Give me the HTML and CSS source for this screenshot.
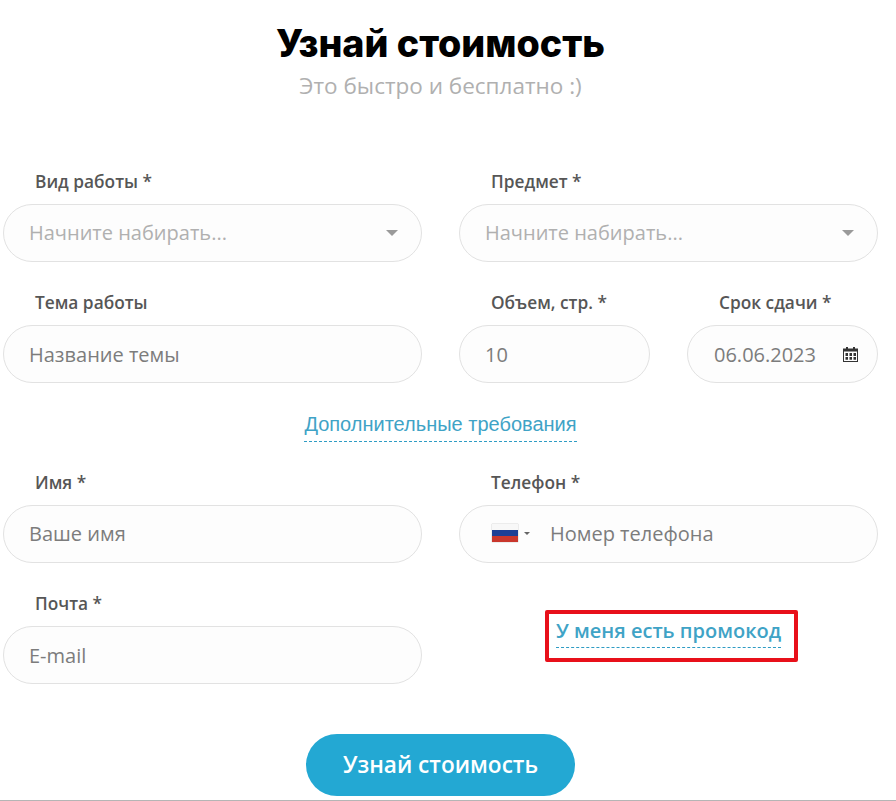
FILE: index.html
```html
<!DOCTYPE html>
<html lang="ru">
<head>
<meta charset="utf-8">
<title>Узнай стоимость</title>
<link rel="stylesheet" href="styles.css">
</head>
<body>
<main class="page">
  <h1 class="title">Узнай стоимость</h1>
  <p class="subtitle">Это быстро и бесплатно :)</p>
  <form class="form">
    <div class="row row-first">
      <div class="field">
        <label class="label">Вид работы *</label>
        <div class="control control-select">
          <span class="placeholder">Начните набирать...</span>
          <span class="caret"></span>
        </div>
      </div>
      <div class="field">
        <label class="label">Предмет *</label>
        <div class="control control-select">
          <span class="placeholder">Начните набирать...</span>
          <span class="caret"></span>
        </div>
      </div>
    </div>
    <div class="row">
      <div class="field">
        <label class="label">Тема работы</label>
        <div class="control"><span class="value">Название темы</span></div>
      </div>
      <div class="pair">
        <div class="field">
          <label class="label">Объем, стр. *</label>
          <div class="control"><span class="value">10</span></div>
        </div>
        <div class="field">
          <label class="label">Срок сдачи *</label>
          <div class="control control-date">
            <span class="value">06.06.2023</span>
            <svg class="calendar" viewBox="0 0 15 15" aria-hidden="true">
              <path fill="#333" fill-rule="evenodd" d="M3 0h2v1.500h5V0h2v1.500h3V15H0V1.500h3zM1 4.500V14h13V4.500zM2.500 6h2.500v3H2.500zm4 0h2.500v3H6.500zm4 0h2.500v3h-2.500zM2.500 10h2.500v2.800H2.500zm4 0h2.500v2.800H6.500zm4 0h2.500v2.800h-2.500z"/>
            </svg>
          </div>
        </div>
      </div>
    </div>
    <div class="extra"><a class="extra-link">Дополнительные требования</a></div>
    <div class="row row-contacts">
      <div class="field">
        <label class="label">Имя *</label>
        <div class="control control-raised"><span class="value">Ваше имя</span></div>
      </div>
      <div class="field">
        <label class="label">Телефон *</label>
        <div class="control control-phone control-raised">
          <span class="flag"><i class="stripe white"></i><i class="stripe blue"></i><i class="stripe red"></i></span>
          <span class="mini-caret"></span>
          <span class="value">Номер телефона</span>
        </div>
      </div>
    </div>
    <div class="row">
      <div class="field">
        <label class="label">Почта *</label>
        <div class="control"><span class="value">E-mail</span></div>
      </div>
      <div class="promo-cell">
        <div class="promo-box"><a class="promo-link">У меня есть промокод</a></div>
      </div>
    </div>
    <div class="actions"><button class="submit" type="button">Узнай стоимость</button></div>
  </form>
</main>
</body>
</html>
```
FILE: styles.css
```css
* { box-sizing: border-box; }
html, body { margin: 0; height: 100%; }
body { background: #fff; font-family: "Open Sans", "Liberation Sans", sans-serif; overflow: hidden; }
.page { height: 801px; padding: 23px 18px 0 3px; border-bottom: 1px solid #b5b5b5; }
.title { margin: 0; text-align: center; font-family: Inter, "Open Sans", sans-serif; font-weight: 800; font-size: 37.700px; line-height: 41px; color: #000; }
.subtitle { margin: 5px 0 0; text-align: center; font-size: 22.500px; line-height: 34px; color: #b0b0b0; }
.form { margin-top: 67px; }
.row { display: grid; grid-template-columns: 419px 419px; column-gap: 37px; margin-top: 29px; }
.row-first { margin-top: 0; }
.row-contacts { margin-top: 0; }
.pair { display: grid; grid-template-columns: 191px 191px; column-gap: 37px; }
.label { display: block; padding: 1px 0 0 32px; font-weight: 600; font-size: 17.300px; line-height: 22px; color: #565656; margin-bottom: 11px; }
.control { height: 58px; border: 1px solid #e2e2e2; border-radius: 29px; background: #fdfdfd; display: flex; align-items: center; padding: 0 25px; font-size: 20px; color: #7c7c7c; }
.control-raised { padding-bottom: 2px; }
.placeholder { color: #b0b0b0; flex: 1; }
.control-select { padding-right: 23px; padding-bottom: 2px; }
.caret { width: 0; height: 0; border-left: 6px solid transparent; border-right: 6px solid transparent; border-top: 6px solid #9a9a9a; margin-top: 2px; }
.control-date { justify-content: space-between; padding-left: 26px; padding-right: 19px; }
.calendar { width: 15px; height: 15px; flex: none; }
.control-phone { padding-left: 32px; }
.flag { width: 26px; height: 18px; display: flex; flex-direction: column; flex: none; box-shadow: 0 0 1px #999; }
.stripe { flex: 1; display: block; }
.white { background: #f8f8f8; }
.blue { background: #1c3f95; }
.red { background: #c9372c; }
.mini-caret { width: 0; height: 0; border-left: 3px solid transparent; border-right: 3px solid transparent; border-top: 3px solid #666; margin: 0 20px 0 6px; }
.extra { text-align: center; margin: 25px 0 30px; height: 33px; }
.extra-link { display: inline-block; font-family: "Liberation Sans", Arial, sans-serif; font-size: 20px; line-height: 33px; color: #3fa3c6; border-bottom: 1px dashed #2f9cc4; }
.promo-cell { display: flex; align-items: flex-start; padding: 18px 0 0 86px; }
.promo-box { width: 253px; height: 52px; border: 4px solid #e8101a; border-radius: 2px; padding: 1px 0 0 7px; }
.promo-link { display: inline-block; font-weight: 600; font-size: 20px; line-height: 32px; color: #3fa3c6; border-bottom: 1px dashed #2f9cc4; white-space: nowrap; }
.actions { display: flex; justify-content: center; margin-top: 50px; }
.submit { width: 269px; height: 62px; border: 0; padding: 0 0 2px; border-radius: 31px; background: #23a8d3; color: #fff; font-family: "Open Sans", sans-serif; font-weight: 600; font-size: 22.600px; }
```
